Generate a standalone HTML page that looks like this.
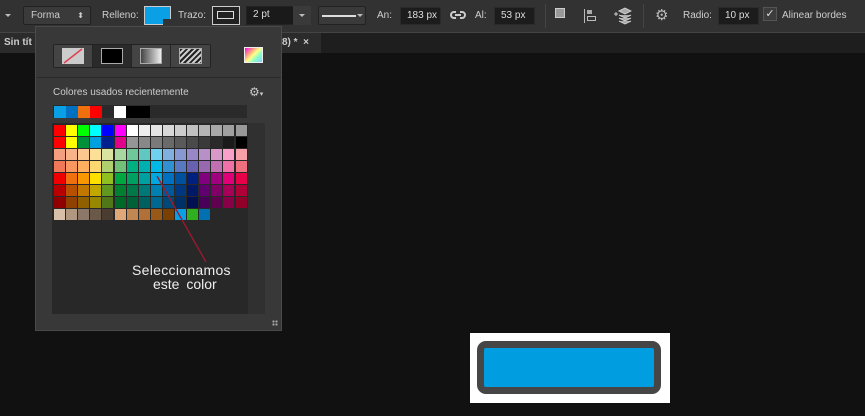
<!DOCTYPE html>
<html><head><meta charset="utf-8"><style>
*{margin:0;padding:0;box-sizing:border-box}
body{width:865px;height:416px;background:#111;position:relative;overflow:hidden;font-family:"Liberation Sans",sans-serif;font-size:10px;color:#cfcfcf}
.a{position:absolute}
.box{position:absolute;background:#1c1c1c;border:1px solid #4a4a4a;color:#ddd;font-size:10px;line-height:16px;padding-left:6px}
.btn{position:absolute;background:#3a3a3a;border:1px solid #222;border-radius:2px}
.sw{position:absolute;width:12px;height:12px}
.ic{position:absolute}
</style></head><body>
<div class="a" style="left:0;top:0;width:865px;height:33px;background:#323232;border-bottom:1px solid #444"></div>
<div class="a" style="left:0;top:33px;width:865px;height:20px;background:#1e1e1e"></div>
<div class="a" style="left:0;top:33px;width:36px;height:20px;background:#2b2b2b;color:#ccc;font-weight:bold;font-size:10px;line-height:20px;padding-left:4px">Sin tít</div>
<div class="a" style="left:281px;top:33px;width:40px;height:20px;background:#2b2b2b;color:#ccc;font-weight:bold;font-size:10px;line-height:20px;padding-left:1px">8) * &nbsp;×</div>
<div class="a" style="left:5px;top:14px;border:3px solid transparent;border-top:3px solid #bbb"></div>
<div class="btn" style="left:23px;top:6px;width:68px;height:19px;color:#ccc;line-height:17px;padding-left:7px">Forma<span style="position:absolute;right:6px;top:0;font-size:8px">⬍</span></div>
<div class="a" style="left:102px;top:10px;line-height:12px">Relleno:</div>
<div class="a" style="left:144px;top:6px;width:27px;height:19px;border:1px solid #ccc;background:#0aa0e6"></div>
<div class="a" style="left:163px;top:19px;width:8px;height:6px;background:#333"></div>
<div class="a" style="left:178px;top:10px;line-height:12px">Trazo:</div>
<div class="a" style="left:212px;top:6px;width:28px;height:19px;border:1px solid #ccc;background:#222"></div>
<div class="a" style="left:217px;top:11px;width:17px;height:8px;border:1px solid #ddd"></div>
<div class="box" style="left:246px;top:6px;width:65px;height:19px;background:#1a1a1a;border-color:#222">2 pt</div>
<div class="a" style="left:293px;top:6px;width:18px;height:19px;background:#3a3a3a"></div>
<div class="a" style="left:299px;top:14px;border:3px solid transparent;border-top:3px solid #bbb"></div>
<div class="btn" style="left:318px;top:6px;width:48px;height:19px"></div>
<div class="a" style="left:322px;top:15px;width:34px;height:2px;background:#ddd"></div>
<div class="a" style="left:357px;top:14px;border:3px solid transparent;border-top:3px solid #bbb"></div>
<div class="a" style="left:377px;top:10px;line-height:12px">An:</div>
<div class="box" style="left:400px;top:7px;width:41px;height:18px;border-color:#2a2a2a">183 px</div>
<svg class="ic" style="left:450px;top:9px" width="16" height="12"><path d="M6 3H4a3 3 0 000 6h2M10 3h2a3 3 0 010 6h-2M5 6h6" stroke="#ccc" stroke-width="2" fill="none"/></svg>
<div class="a" style="left:475px;top:10px;line-height:12px">Al:</div>
<div class="box" style="left:494px;top:7px;width:41px;height:18px;border-color:#2a2a2a">53 px</div>
<div class="a" style="left:545px;top:4px;width:1px;height:24px;background:#444"></div>
<div class="a" style="left:555px;top:8px;width:10px;height:10px;background:#999;border:1px solid #ccc"></div>
<div class="a" style="left:584px;top:9px;width:1px;height:14px;background:#bbb"></div>
<div class="a" style="left:587px;top:10px;width:5px;height:4px;background:#aaa"></div>
<div class="a" style="left:587px;top:16px;width:9px;height:5px;border:1px solid #bbb"></div>
<svg class="ic" style="left:612px;top:6px" width="20" height="20"><path d="M2 8h4M4 6v4" stroke="#ccc"/><path d="M7 5l6-3 6 3-6 3z M7 9l6 3 6-3M7 12l6 3 6-3M7 15l6 3 6-3" fill="#aaa" stroke="#ccc"/></svg>
<div class="a" style="left:643px;top:4px;width:1px;height:24px;background:#444"></div>
<div class="a" style="left:655px;top:8px;font-size:15px;color:#bbb;line-height:15px">⚙</div>
<div class="a" style="left:683px;top:10px;line-height:12px">Radio:</div>
<div class="box" style="left:718px;top:7px;width:41px;height:18px;border-color:#2a2a2a">10 px</div>
<div class="a" style="left:763px;top:7px;width:14px;height:14px;background:#3c3c3c;border:1px solid #555;color:#ddd;font-size:11px;line-height:12px;text-align:center">✓</div>
<div class="a" style="left:782px;top:10px;line-height:12px;color:#ccc">Alinear bordes</div>
<div class="a" style="left:35px;top:26px;width:247px;height:305px;background:#383838;border:1px solid #4a4a4a"></div>
<div class="a" style="left:53px;top:44px;width:158px;height:24px;background:#262626;border:1px solid #222;border-radius:2px"></div>
<div class="a" style="left:54px;top:45px;width:38px;height:22px;background:#444"></div>
<div class="a" style="left:93px;top:45px;width:38px;height:22px;background:#2a2a2a"></div>
<div class="a" style="left:132px;top:45px;width:38px;height:22px;background:#444"></div>
<div class="a" style="left:171px;top:45px;width:39px;height:22px;background:#444"></div>
<svg class="ic" style="left:62px;top:48px" width="22" height="16"><rect width="22" height="16" fill="#ccc"/><path d="M2 15L20 1" stroke="#e04050" stroke-width="1.5"/></svg>
<div class="a" style="left:101px;top:48px;width:22px;height:16px;background:#000;border:1px solid #aaa"></div>
<div class="a" style="left:140px;top:48px;width:22px;height:16px;background:linear-gradient(90deg,#444,#eee);border:1px solid #aaa"></div>
<div class="a" style="left:179px;top:48px;width:23px;height:16px;background:repeating-linear-gradient(135deg,#222 0 2px,#ccc 2px 4px);border:1px solid #aaa"></div>
<div class="a" style="left:244px;top:47px;width:19px;height:16px;border:1px solid #eee;background:linear-gradient(135deg,#f0f 0%,#f88 25%,#ff8 50%,#8fc 70%,#8cf 100%)"></div>
<div class="a" style="left:36px;top:77px;width:245px;height:1px;background:#2a2a2a"></div>
<div class="a" style="left:53px;top:87px;font-size:10px;color:#ccc">Colores usados recientemente</div>
<div class="a" style="left:249px;top:85px;font-size:12px;color:#ccc">⚙<span style="font-size:7px">▾</span></div>
<div class="a" style="left:53px;top:105px;width:194px;height:13px;background:#2a2a2a"></div>
<div class="sw" style="left:54px;top:106px;background:#0aa0e6"></div>
<div class="sw" style="left:66px;top:106px;background:#0070c0"></div>
<div class="sw" style="left:78px;top:106px;background:#f07010"></div>
<div class="sw" style="left:90px;top:106px;background:#f00"></div>
<div class="sw" style="left:114px;top:106px;background:#fff"></div>
<div class="sw" style="left:126px;top:106px;background:#000"></div>
<div class="sw" style="left:138px;top:106px;background:#000"></div>
<div class="a" style="left:52px;top:123px;width:196px;height:191px;background:#282828"></div>
<div class="a" style="left:248px;top:123px;width:17px;height:191px;background:#303030"></div>
<div id="g"></div>
<svg class="a" style="left:0;top:0" width="865" height="416"><path d="M157 176L206 262" stroke="#a01830" stroke-width="1.3"/></svg>
<div class="a" style="left:132px;top:263px;font-size:14px;color:#eee;line-height:15px;letter-spacing:0.3px">Seleccionamos</div>
<div class="a" style="left:153px;top:277px;font-size:14px;color:#eee;line-height:15px;word-spacing:3px">este color</div>
<div class="a" style="left:272px;top:320px;width:6px;height:6px;background:radial-gradient(circle,#aaa 1px,transparent 1.2px) 0 0/3px 3px"></div>
<div class="a" style="left:470px;top:333px;width:200px;height:70px;background:#fff"></div>
<div class="a" style="left:477px;top:341px;width:184px;height:53px;background:#009ee0;border:7px solid #464646;border-radius:9px"></div>
<script>
var g=document.getElementById('g'),h='';
var R=[
['#f00','#ff0','#0f0','#0ff','#00f','#f0f','#fff','#eee','#e4e4e4','#d8d8d8','#ccc','#c0c0c0','#b4b4b4','#a8a8a8','#a0a0a0','#999'],
['#f00','#ff0','#00903a','#00a0e0','#002090','#e0008a','#959595','#888','#7a7a7a','#6a6a6a','#5a5a5a','#4a4a4a','#3a3a3a','#2a2a2a','#1a1a1a','#000'],
['#f4a080','#f8b488','#fcc890','#fde098','#d8e4a0','#a8d8a0','#70c89a','#60c8c0','#70d0f0','#80b0e0','#8898d0','#9888c8','#b890c8','#d898c8','#f8a0c8','#f8a0a8'],
['#f07858','#f89860','#fcb060','#fdd870','#b0d070','#70c078','#00b080','#00b0b0','#00b8e8','#3090d0','#5878c0','#6860b0','#9868b0','#c070b0','#f070a8','#f07080'],
['#f00000','#f07010','#f89800','#fde000','#90c020','#00a840','#00a060','#00a0a0','#00a8e0','#0070c0','#0050a0','#002080','#800080','#a00080','#e00078','#e80048'],
['#b80000','#b85000','#c07800','#c0a800','#609820','#008030','#007848','#007878','#0080b0','#005898','#003880','#001868','#600070','#800068','#a80058','#b00038'],
['#900000','#904000','#906000','#988800','#507818','#006828','#006038','#006060','#006890','#004878','#003068','#001050','#480058','#600050','#880048','#900028'],
['#d8c0a8','#b09880','#8c7868','#6a5848','#4a3c30','#e0a878','#c08850','#b07038','#985818','#7a4000','#0aa0e6','#30b020','#0070b0']];
for(var j=0;j<R.length;j++)for(var i=0;i<R[j].length;i++)
h+='<div class="sw" style="left:'+(54+i*12.1)+'px;top:'+(125+j*12)+'px;width:11px;height:11px;background:'+R[j][i]+'"></div>';
g.innerHTML=h;
</script>
</body></html>
